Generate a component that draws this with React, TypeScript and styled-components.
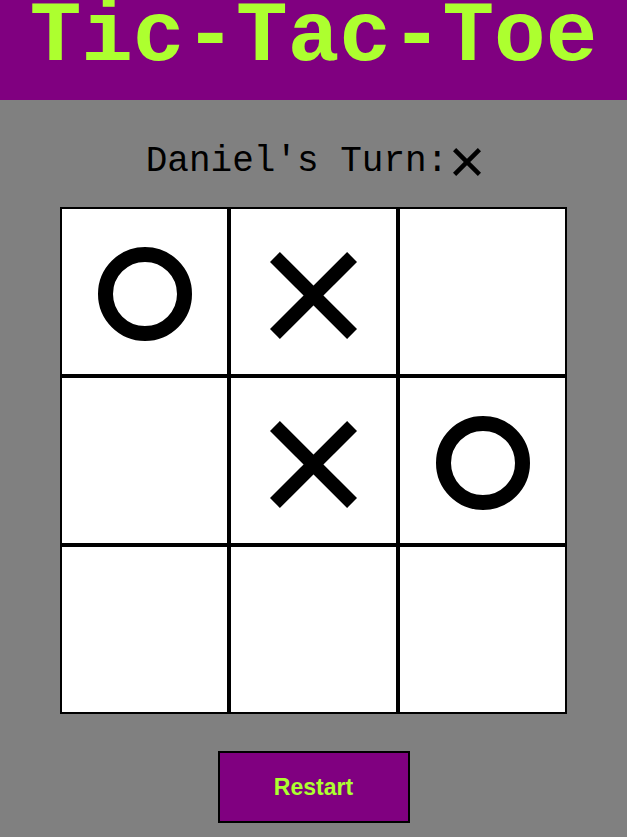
import styled, { createGlobalStyle } from "styled-components";

type Mark = "X" | "O" | null;

const board: Mark[] = ["O", "X", null, null, "X", "O", null, null, null];

const GlobalStyle = createGlobalStyle`
  body {
    margin: 0;
    background-color: #808080;
    font-family: "Liberation Mono", "Courier New", monospace;
  }
`;

const CrossIcon = ({ size, stroke }: { size: number; stroke: number }) => {
  const p = stroke / 2 / Math.SQRT2;
  return (
    <svg width={size} height={size} viewBox={`0 0 ${size} ${size}`}>
      <line x1={p} y1={p} x2={size - p} y2={size - p} stroke="#000" strokeWidth={stroke} />
      <line x1={size - p} y1={p} x2={p} y2={size - p} stroke="#000" strokeWidth={stroke} />
    </svg>
  );
};

const CircleIcon = () => (
  <svg width={94} height={94} viewBox="0 0 94 94">
    <circle cx={47} cy={47} r={39.5} fill="none" stroke="#000" strokeWidth={15} />
  </svg>
);

export default function App() {
  return (
    <>
      <GlobalStyle />
      <Header>
        <Title>Tic-Tac-Toe</Title>
      </Header>
      <Main>
        <Turn>
          <TurnText>Daniel's Turn:</TurnText>
          <CrossIcon size={28} stroke={4.5} />
        </Turn>
        <Board>
          {board.map((mark, i) => (
            <Cell key={i}>
              {mark === "X" && (
                <MarkSlot $shift={8}>
                  <CrossIcon size={87} stroke={14} />
                </MarkSlot>
              )}
              {mark === "O" && (
                <MarkSlot $shift={4}>
                  <CircleIcon />
                </MarkSlot>
              )}
            </Cell>
          ))}
        </Board>
        <RestartButton>Restart</RestartButton>
      </Main>
    </>
  );
}

const Header = styled.header`
  height: 100px;
  background-color: #800080;
  overflow: hidden;
  text-align: center;
`;

const Title = styled.h1`
  margin: 0;
  font-family: "Liberation Mono", "Courier New", monospace;
  font-size: 86px;
  font-weight: bold;
  line-height: 74px;
  color: #adff2f;
`;

const Main = styled.main`
  display: flex;
  flex-direction: column;
  align-items: center;
  padding-top: 41px;
  padding-bottom: 14px;
`;

const Turn = styled.div`
  display: flex;
  align-items: center;
  gap: 5px;
  margin-bottom: 25px;
`;

const TurnText = styled.span`
  font-size: 36px;
  color: #000;
`;

const Board = styled.div`
  display: grid;
  grid-template-columns: repeat(3, 169px);
  grid-template-rows: repeat(3, 169px);
`;

const Cell = styled.div`
  box-sizing: border-box;
  border: 2px solid #000;
  background-color: #fff;
  display: flex;
  align-items: center;
  justify-content: center;
`;

const MarkSlot = styled.div<{ $shift: number }>`
  display: flex;
  margin-top: ${(p) => p.$shift}px;
`;

const RestartButton = styled.button`
  margin-top: 37px;
  width: 192px;
  height: 72px;
  box-sizing: border-box;
  border: 2px solid #000;
  background-color: #800080;
  color: #adff2f;
  font-family: "Liberation Sans", Arial, sans-serif;
  font-size: 23px;
  font-weight: bold;
  cursor: pointer;
`;
